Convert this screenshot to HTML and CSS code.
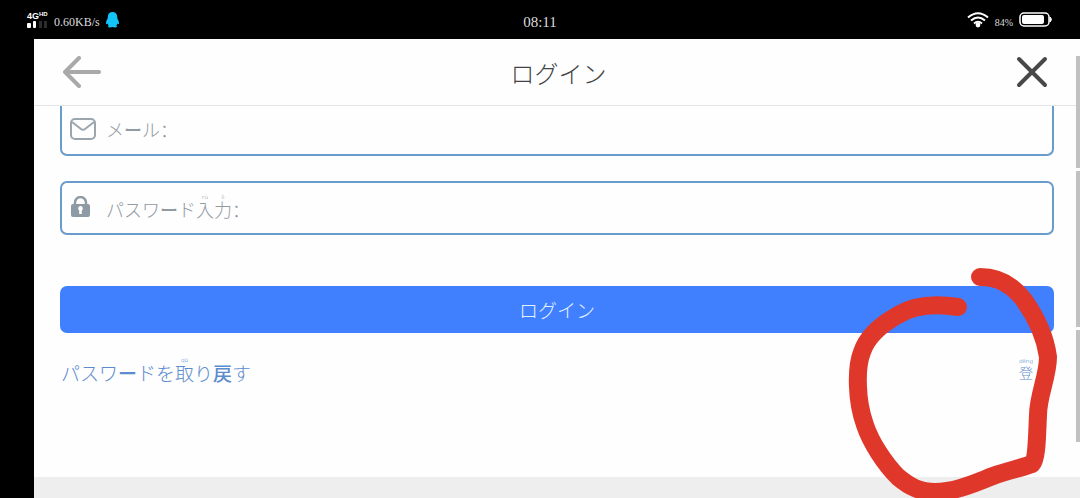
FILE: index.html
```html
<!DOCTYPE html>
<html lang="ja">
<head>
  <meta charset="UTF-8">
  <meta name="viewport" content="width=device-width, initial-scale=1">
  <title>ログイン</title>
  <link rel="stylesheet" href="styles.css">
</head>
<body>
  <div class="statusbar">
    <div class="status-left">
      <div class="network">
        <span class="network-type">4G<sup>HD</sup></span>
        <svg width="21" height="7" viewBox="0 0 21 7">
          <rect x="0" y="2" width="4" height="5" rx="1" fill="#fff"/>
          <rect x="6" y="0" width="3" height="7" rx="1" fill="#fff"/>
          <rect x="12" y="0" width="3" height="7" fill="#2c2c2c"/>
          <rect x="17" y="0" width="3" height="7" fill="#2c2c2c"/>
        </svg>
      </div>
      <span class="speed">0.60KB/s</span>
      <svg class="qq" width="13" height="16" viewBox="0 0 13 16">
        <path d="M6.500 0C3.800 0 1.800 2 1.800 4.600L1.700 6.500C.6 8 0 9.800 0 11.200c0 1.200.7 1.200 1.600.2.200.9.600 1.500 1.200 2.100-1.300.7-1 2 1 2 1.100 0 2-.2 2.700-.5.700.3 1.500.5 2.700.5 2 0 2.300-1.300 1-2 .6-.6 1-1.200 1.200-2.100.9 1 1.600 1 1.600-.2 0-1.400-.6-3.200-1.700-4.700L11.200 4.600C11.200 2 9.200 0 6.500 0z" fill="#12c4f7"/>
      </svg>
    </div>
    <span class="clock">08:11</span>
    <div class="status-right">
      <svg width="22" height="16" viewBox="0 0 22 16" fill="none" stroke="#fff" stroke-width="2">
        <path d="M1 5.500Q11-3 21 5.500M4 8.600Q11 2.500 18 8.600M7 11.600Q11 8 15 11.600"/>
        <circle cx="11" cy="13" r="2.400" fill="#fff" stroke="none"/>
      </svg>
      <span class="percent">84%</span>
      <svg width="34" height="15" viewBox="0 0 34 15">
        <rect x="1" y="1" width="29" height="13" rx="4" fill="none" stroke="#fff" stroke-width="1.500"/>
        <rect x="3" y="3" width="22" height="9" rx="2" fill="#fff"/>
        <path d="M31 5q3 2.500 0 5z" fill="#fff" stroke="#fff"/>
      </svg>
    </div>
  </div>

  <div class="page">
    <header class="titlebar">
      <button class="icon-button" type="button" aria-label="戻る">
        <svg width="38" height="32" viewBox="0 0 38 32" fill="none" stroke="#a9a9a9" stroke-width="4" stroke-linecap="round" stroke-linejoin="round">
          <path d="M16 2L2 16l14 14M2 16h34"/>
        </svg>
      </button>
      <h1>ログイン</h1>
      <button class="icon-button" type="button" aria-label="閉じる">
        <svg width="32" height="32" viewBox="0 0 32 32" fill="none" stroke="#484848" stroke-width="4" stroke-linecap="round">
          <path d="M3 3l26 26M29 3L3 29"/>
        </svg>
      </button>
    </header>

    <form class="login">
      <div class="field field-scrolled">
        <svg width="26" height="22" viewBox="0 0 26 22" fill="none" stroke="#9aa5ad" stroke-width="2">
          <rect x="1" y="1" width="24" height="20" rx="4"/>
          <path d="M2 4l9 7q2 1.500 4 0l9-7"/>
        </svg>
        <label for="mail">メ<b>ー</b>ル<span class="colon" lang="zh-CN">：</span></label>
        <input id="mail" type="email">
      </div>
      <div class="field">
        <svg width="26" height="22" viewBox="0 0 26 22">
          <path d="M5 10V6.500a5.500 5.500 0 0 1 11 0V10" fill="none" stroke="#8e9ba5" stroke-width="2.500"/>
          <rect x="1" y="8" width="19" height="13" rx="2" fill="#8e9ba5"/>
          <path d="M10.500 10a2.400 2.400 0 0 1 1.300 4.400V18H9.200v-3.600A2.400 2.400 0 0 1 10.500 10z" fill="#fff"/>
        </svg>
        <label for="password">パスワ<b>ー</b>ド<ruby>入<rt>rù</rt></ruby><ruby>力<rt>lì</rt></ruby><span class="colon" lang="zh-CN">：</span></label>
        <input id="password" type="password">
      </div>
      <button class="submit" type="submit">ログイン</button>
      <div class="links">
        <a class="recover" href="#">パスワ<b>ー</b>ドを<ruby>取<rt>qǔ</rt></ruby>り<b>戻</b>す</a>
        <a class="register" href="#"><ruby>登<rt>dēng</rt></ruby></a>
      </div>
    </form>
    <footer class="bottom"></footer>
  </div>

  <!-- scroll segments on the right edge -->
  <div class="scroll">
    <span></span>
    <span></span>
    <span></span>
  </div>

  <!-- red marker around the register link -->
  <svg class="marker" width="230" height="238" viewBox="0 0 230 238" fill="none" stroke="#df382b" stroke-width="18" stroke-linecap="round" stroke-linejoin="round">
    <path d="M128 47C108 44 86 44 68 55C50 65 37 77 32 92C26 107 26 140 35 165C41 183 55 204 68 217C80 227 90 232 105 232C126 232 147 222 163 216C177 211 191 208 202 204C207 199 207 175 208 155C208 136 218 116 218 97C215 75 206 57 194 40C181 23 167 17 150 17"/>
  </svg>
</body>
</html>
```
FILE: styles.css
```css
* {
  box-sizing: border-box;
}

body {
  margin: 0;
  min-height: 100vh;
  display: flex;
  flex-direction: column;
  position: relative;
  overflow: hidden;
  background-color: #000;
  font-family: "Noto Sans CJK JP", sans-serif;
  font-weight: 300;
}

svg {
  display: block;
  flex: none;
}

/* status bar */
.statusbar {
  display: grid;
  grid-template-columns: 1fr auto 1fr;
  align-items: center;
  height: 39px;
  padding: 0 27px;
  color: #ddd;
  font-family: "Liberation Serif", serif;
}

.status-left,
.status-right {
  display: flex;
  align-items: center;
  gap: 6px;
}

.status-right {
  justify-content: flex-end;
}

.network-type {
  display: block;
  height: 10px;
  color: #fff;
  font: bold 9px/10px "Liberation Sans", sans-serif;
}

.network-type sup {
  font-size: 6px;
  line-height: 1;
  vertical-align: 3px;
}

.speed {
  font-size: 12px;
  padding-top: 5px;
}

.clock {
  font-size: 15px;
  padding-top: 5px;
}

.percent {
  font-size: 10px;
  padding-top: 5px;
}

/* page */
.page {
  flex: 1;
  display: flex;
  flex-direction: column;
  margin-left: 34px;
  background-color: #fefefe;
}

.titlebar {
  display: flex;
  align-items: center;
  justify-content: space-between;
  height: 67px;
  padding: 0 32px 0 29px;
  border-bottom: 1px solid #e6e6e6;
}

.titlebar h1 {
  margin: 0;
  color: #444;
  font-size: 24px;
  font-weight: 300;
}

.icon-button {
  padding: 0;
  border: 0;
  background: none;
  cursor: pointer;
}

.login {
  flex: 1;
  padding: 0 26px;
}

.field {
  display: flex;
  align-items: center;
  gap: 10px;
  height: 54px;
  margin-bottom: 51px;
  padding: 0 8px 2px;
  border: 2px solid #6a9ccb;
  border-radius: 7px;
}

.field-scrolled {
  height: 50px;
  margin-bottom: 25px;
  border-top: 0;
  border-radius: 0 0 7px 7px;
}

.field label {
  color: #929aa2;
  font-size: 18px;
  line-height: 24px;
}

.field input {
  flex: 1;
  min-width: 0;
  height: 40px;
  border: 0;
  outline: 0;
  background: none;
  font-size: 18px;
}

.colon {
  font-family: "Noto Sans CJK SC", sans-serif;
}

b {
  font-weight: 500;
}

rt {
  font-family: "Noto Sans", sans-serif;
  font-size: 6px;
  line-height: 6px;
}

.submit {
  display: block;
  width: 100%;
  height: 47px;
  padding: 0;
  border: 0;
  border-radius: 7px;
  background-color: #4080ff;
  color: #e4f2ff;
  font-family: inherit;
  font-size: 19px;
  font-weight: 300;
  cursor: pointer;
}

.links {
  display: flex;
  align-items: center;
  justify-content: space-between;
  padding: 24px 21px 0 1px;
}

.links a {
  color: #5d8cce;
  text-decoration: none;
  line-height: 24px;
}

.recover {
  font-size: 19px;
}

.register {
  font-size: 14px;
}

.bottom {
  height: 21px;
  background-color: #eee;
}

/* overlays */
.scroll {
  position: absolute;
  top: 56px;
  right: 0;
  bottom: 56px;
  width: 4px;
  display: flex;
  flex-direction: column;
  gap: 3px;
}

.scroll span {
  flex: 5;
  background-color: #c1c1c1;
}

.scroll span:nth-child(2) {
  flex: 7;
}

.marker {
  position: absolute;
  top: 260px;
  right: 20px;
  pointer-events: none;
}
```
